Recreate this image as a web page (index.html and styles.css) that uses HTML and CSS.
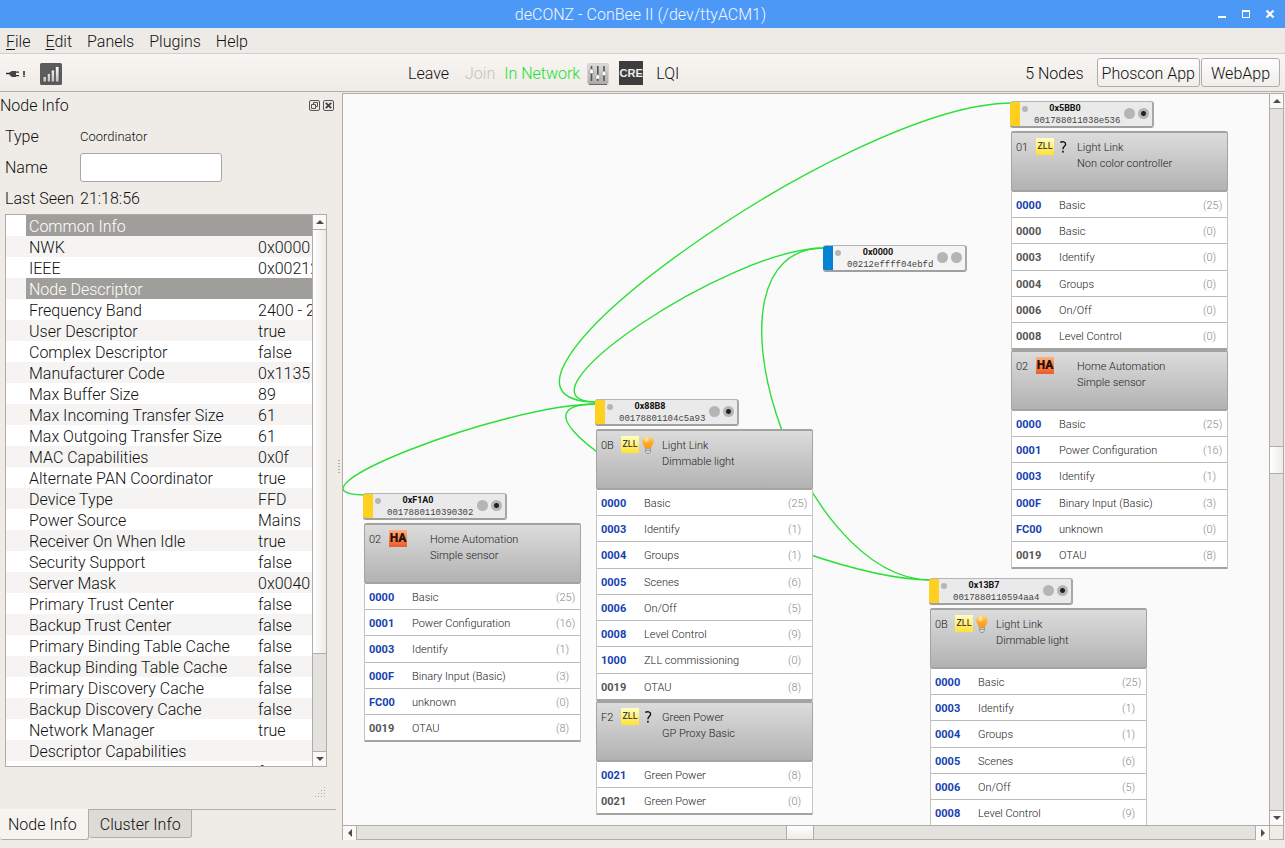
FILE: index.html
```html
<!DOCTYPE html>
<html lang="en">
<head>
<meta charset="utf-8">
<title>deCONZ - ConBee II (/dev/ttyACM1)</title>
<link rel="stylesheet" href="styles.css">
</head>
<body>
<svg class="defs" aria-hidden="true">
  <defs>
    <linearGradient id="bulbFill" x1="0" y1="0" x2="0" y2="1"><stop offset="0" stop-color="#ffd98c"/><stop offset=".45" stop-color="#ffb02e"/><stop offset="1" stop-color="#f59a12"/></linearGradient>
    <linearGradient id="barFill" x1="0" y1="0" x2="0" y2="1"><stop offset="0" stop-color="#ffffff"/><stop offset="1" stop-color="#bdbdbd"/></linearGradient>
    <linearGradient id="mixFill" x1="0" y1="0" x2="0" y2="1"><stop offset="0" stop-color="#dcdcda"/><stop offset="1" stop-color="#aaaaa8"/></linearGradient>
    <symbol id="bulb" viewBox="0 0 12 18">
      <path d="M6 .3C2.600.3.400 2.700.400 5.600c0 2.500 1.700 3.800 2.500 6.900h6.200c.8-3.100 2.500-4.400 2.500-6.900C11.600 2.700 9.400.3 6 .3z" fill="url(#bulbFill)"/>
      <ellipse cx="4.500" cy="4" rx="2.200" ry="2.400" fill="#fff" opacity=".45"/>
      <path d="M3.500 12.800h5v2.700L7.200 17.500H4.800L3.500 15.500z" fill="#d5d5d5" stroke="#8c8c8c" stroke-width=".8"/>
      <path d="M3.500 14.500h5" stroke="#8c8c8c" stroke-width=".7"/>
    </symbol>
    <symbol id="ask" viewBox="0 0 8 12">
      <path d="M1.200 1.400C3.200.4 6.600.5 6.600 3.200c0 2-2.700 2.300-2.700 5" fill="none" stroke="#111" stroke-width="1.400"/>
      <rect x="3.100" y="9.800" width="1.600" height="1.800" fill="#111"/>
    </symbol>
  </defs>
</svg>
<div class="app">
  <header class="titlebar">
    <h1>deCONZ - ConBee II (/dev/ttyACM1)</h1>
    <div class="window-buttons">
      <button aria-label="Minimize"><svg width="10" height="10" viewBox="0 0 10 10"><path d="M1 8h8" stroke="#fff" stroke-width="2"/></svg></button>
      <button aria-label="Maximize"><svg width="10" height="10" viewBox="0 0 10 10"><path d="M1.500 2v6.500h7V2" fill="none" stroke="#fff"/><path d="M1 2h8" stroke="#fff" stroke-width="2"/></svg></button>
      <button aria-label="Close"><svg width="10" height="10" viewBox="0 0 10 10"><path d="M1.500 1.500l7 7M8.500 1.500l-7 7" stroke="#fff" stroke-width="2.200"/></svg></button>
    </div>
  </header>
  <nav class="menubar">
    <button><u>F</u>ile</button><button><u>E</u>dit</button><button>Panels</button><button>Plugins</button><button>Help</button>
  </nav>
  <div class="toolbar">
    <div class="tools tools-left">
      <button aria-label="Connection"><svg width="22" height="10" viewBox="0 0 22 10"><path d="M1 4.500h4" stroke="#222" stroke-width="1.400"/><path d="M4.500 3.200L7 2h4v6H7L4.500 6z" fill="#444"/><path d="M11 3.200h3M11 6.700h3" stroke="#333" stroke-width="1.200"/><path d="M19 2v4.500M19 7v1" stroke="#333" stroke-width="1.600"/></svg></button>
      <button aria-label="Signal strength"><svg width="22" height="22" viewBox="0 0 22 22"><rect width="22" height="22" rx="1.500" fill="#5c5c5c"/><path d="M3 13.500h3.500V19H3zM7.300 10.500h3.200V19H7.300zM11.200 7h3.400v12h-3.400zM15.400 3.500H19V19h-3.600z" fill="url(#barFill)" stroke="#3a3a3a" stroke-width=".6"/></svg></button>
    </div>
    <div class="tools">
      <button class="wide">Leave</button><button class="wide" disabled>Join</button>
      <span class="online">In Network</span>
      <button aria-label="Mixer"><svg width="22" height="22" viewBox="0 0 22 22"><rect x=".5" y=".5" width="21" height="21" rx="2" fill="url(#mixFill)" stroke="#d4d2cf"/><path d="M2 21.500h18" stroke="#686868"/><path d="M4.500 3v15M10.800 3v15M17 3v15" stroke="#555" stroke-width="1.600"/><path d="M2.500 7.500q2-3 4 0v3h-4zM8.800 13q2-3 4 0v3h-4zM15 9.500q2-3 4 0v3h-4z" fill="#fff" stroke="#777" stroke-width=".5"/></svg></button>
      <button class="cre">CRE</button>
      <button>LQI</button>
    </div>
    <div class="tools tools-right">
      <span>5 Nodes</span>
      <button class="push">Phoscon App</button>
      <button class="push push-roomy">WebApp</button>
    </div>
  </div>

  <main class="main">
    <aside class="dock">
      <div class="dock-title">
        <h2>Node Info</h2>
        <button aria-label="Float"><svg width="11" height="11" viewBox="0 0 11 11"><rect x=".5" y=".5" width="10" height="10" rx="1.500" fill="none" stroke="#555"/><path d="M4.500 4V2.500h4v4H7M2.500 4.500h4v4h-4z" fill="none" stroke="#555"/></svg></button>
        <button aria-label="Close panel"><svg width="11" height="11" viewBox="0 0 11 11"><rect x=".5" y=".5" width="10" height="10" rx="1.500" fill="none" stroke="#555"/><path d="M2.800 2.800l5.400 5.400M8.200 2.800L2.800 8.200" stroke="#444" stroke-width="1.900"/></svg></button>
      </div>
      <div class="form">
        <span>Type</span><span class="small">Coordinator</span>
        <label for="name">Name</label><input id="name" type="text">
        <span>Last Seen</span><span>21:18:56</span>
      </div>
      <div class="tree">
        <div class="tree-view">
          <table>
            <colgroup><col class="c-indent"><col class="c-key"><col></colgroup>
            <tbody>
            <tr class="group"><td></td><th colspan="2">Common Info</th></tr>
            <tr><td></td><td>NWK</td><td>0x0000</td></tr>
            <tr><td></td><td>IEEE</td><td>0x00212effff04ebfd</td></tr>
            <tr class="group"><td></td><th colspan="2">Node Descriptor</th></tr>
            <tr><td></td><td>Frequency Band</td><td>2400 - 2483.5 MHz</td></tr>
            <tr><td></td><td>User Descriptor</td><td>true</td></tr>
            <tr><td></td><td>Complex Descriptor</td><td>false</td></tr>
            <tr><td></td><td>Manufacturer Code</td><td>0x1135</td></tr>
            <tr><td></td><td>Max Buffer Size</td><td>89</td></tr>
            <tr><td></td><td>Max Incoming Transfer Size</td><td>61</td></tr>
            <tr><td></td><td>Max Outgoing Transfer Size</td><td>61</td></tr>
            <tr><td></td><td>MAC Capabilities</td><td>0x0f</td></tr>
            <tr><td></td><td>Alternate PAN Coordinator</td><td>true</td></tr>
            <tr><td></td><td>Device Type</td><td>FFD</td></tr>
            <tr><td></td><td>Power Source</td><td>Mains</td></tr>
            <tr><td></td><td>Receiver On When Idle</td><td>true</td></tr>
            <tr><td></td><td>Security Support</td><td>false</td></tr>
            <tr><td></td><td>Server Mask</td><td>0x0040</td></tr>
            <tr><td></td><td>Primary Trust Center</td><td>false</td></tr>
            <tr><td></td><td>Backup Trust Center</td><td>false</td></tr>
            <tr><td></td><td>Primary Binding Table Cache</td><td>false</td></tr>
            <tr><td></td><td>Backup Binding Table Cache</td><td>false</td></tr>
            <tr><td></td><td>Primary Discovery Cache</td><td>false</td></tr>
            <tr><td></td><td>Backup Discovery Cache</td><td>false</td></tr>
            <tr><td></td><td>Network Manager</td><td>true</td></tr>
            <tr><td></td><td>Descriptor Capabilities</td><td></td></tr>
            <tr><td></td><td>Extended Active Endpoint List</td><td>false</td></tr>
            </tbody>
          </table>
        </div>
        <div class="vbar">
          <button class="arrow" aria-label="Scroll up"><svg width="8" height="4" viewBox="0 0 8 4"><path d="M0 4L4 0l4 4z"/></svg></button>
          <div class="track track-tree"><div class="thumb"></div></div>
          <button class="arrow" aria-label="Scroll down"><svg width="8" height="4" viewBox="0 0 8 4"><path d="M0 0l4 4 4-4z"/></svg></button>
        </div>
      </div>
      <div class="grip"><svg width="11" height="11" viewBox="0 0 11 11" fill="#b3b0ac"><path d="M9 0h1v1H9zM6 3h1v1H6zM9 3h1v1H9zM3 6h1v1H3zM6 6h1v1H6zM9 6h1v1H9zM0 9h1v1H0zM3 9h1v1H3zM6 9h1v1H6zM9 9h1v1H9z"/></svg></div>
      <div class="tabs" role="tablist">
        <button class="tab active" role="tab" aria-selected="true">Node Info</button><button class="tab" role="tab" aria-selected="false">Cluster Info</button>
      </div>
    </aside>
    <div class="splitter"><div class="handle"></div></div>

    <section class="canvas" aria-label="Network">
      <div class="scene">
        <svg class="links" width="926" height="732" viewBox="343 94 926 732" fill="none" stroke="#2bdf36" stroke-width="1.400">
          <path d="M1012 103C848 103 433 402 597 402"/>
          <path d="M824 248C729 248 502 402 597 402"/>
          <path d="M597 404C503 404 271 495 365 495"/>
          <path d="M824 248C689 248 796 580 931 580"/>
          <path d="M597 404C463 404 797 580 931 580"/>
        </svg>

        <article class="node n-5bb0">
          <div class="chip"><i class="led"></i><div class="ids"><b>0x5BB0</b><span>001788011038e536</span></div><i class="dot"></i><i class="dot on"></i></div>
          <div class="endpoints">
            <div class="head"><span class="number">01</span><span class="badge zll">ZLL</span><svg class="kind ask" width="8" height="12"><use href="#ask"/></svg><p>Light Link<br>Non color controller</p></div>
            <table class="clusters"><tbody>
              <tr><th>0000</th><td>Basic</td><td>(25)</td></tr>
              <tr class="out"><th>0000</th><td>Basic</td><td>(0)</td></tr>
              <tr class="out"><th>0003</th><td>Identify</td><td>(0)</td></tr>
              <tr class="out"><th>0004</th><td>Groups</td><td>(0)</td></tr>
              <tr class="out"><th>0006</th><td>On/Off</td><td>(0)</td></tr>
              <tr class="out"><th>0008</th><td>Level Control</td><td>(0)</td></tr>
            </tbody></table>
            <div class="head"><span class="number">02</span><span class="badge ha">HA</span><span></span><p>Home Automation<br>Simple sensor</p></div>
            <table class="clusters"><tbody>
              <tr><th>0000</th><td>Basic</td><td>(25)</td></tr>
              <tr><th>0001</th><td>Power Configuration</td><td>(16)</td></tr>
              <tr><th>0003</th><td>Identify</td><td>(1)</td></tr>
              <tr><th>000F</th><td>Binary Input (Basic)</td><td>(3)</td></tr>
              <tr><th>FC00</th><td>unknown</td><td>(0)</td></tr>
              <tr class="out"><th>0019</th><td>OTAU</td><td>(8)</td></tr>
            </tbody></table>
          </div>
        </article>

        <article class="node n-0000">
          <div class="chip coordinator"><i class="led"></i><div class="ids"><b>0x0000</b><span>00212effff04ebfd</span></div><i class="dot"></i><i class="dot"></i></div>
        </article>

        <article class="node n-88b8">
          <div class="chip"><i class="led"></i><div class="ids"><b>0x88B8</b><span>00178801104c5a93</span></div><i class="dot"></i><i class="dot on"></i></div>
          <div class="endpoints">
            <div class="head"><span class="number">0B</span><span class="badge zll">ZLL</span><svg class="kind" width="12" height="18"><use href="#bulb"/></svg><p>Light Link<br>Dimmable light</p></div>
            <table class="clusters"><tbody>
              <tr><th>0000</th><td>Basic</td><td>(25)</td></tr>
              <tr><th>0003</th><td>Identify</td><td>(1)</td></tr>
              <tr><th>0004</th><td>Groups</td><td>(1)</td></tr>
              <tr><th>0005</th><td>Scenes</td><td>(6)</td></tr>
              <tr><th>0006</th><td>On/Off</td><td>(5)</td></tr>
              <tr><th>0008</th><td>Level Control</td><td>(9)</td></tr>
              <tr><th>1000</th><td>ZLL commissioning</td><td>(0)</td></tr>
              <tr class="out"><th>0019</th><td>OTAU</td><td>(8)</td></tr>
            </tbody></table>
            <div class="head"><span class="number">F2</span><span class="badge zll">ZLL</span><svg class="kind ask" width="8" height="12"><use href="#ask"/></svg><p>Green Power<br>GP Proxy Basic</p></div>
            <table class="clusters"><tbody>
              <tr><th>0021</th><td>Green Power</td><td>(8)</td></tr>
              <tr class="out"><th>0021</th><td>Green Power</td><td>(0)</td></tr>
            </tbody></table>
          </div>
        </article>

        <article class="node n-f1a0">
          <div class="chip"><i class="led"></i><div class="ids"><b>0xF1A0</b><span>0017880110390302</span></div><i class="dot"></i><i class="dot on"></i></div>
          <div class="endpoints">
            <div class="head"><span class="number">02</span><span class="badge ha">HA</span><span></span><p>Home Automation<br>Simple sensor</p></div>
            <table class="clusters"><tbody>
              <tr><th>0000</th><td>Basic</td><td>(25)</td></tr>
              <tr><th>0001</th><td>Power Configuration</td><td>(16)</td></tr>
              <tr><th>0003</th><td>Identify</td><td>(1)</td></tr>
              <tr><th>000F</th><td>Binary Input (Basic)</td><td>(3)</td></tr>
              <tr><th>FC00</th><td>unknown</td><td>(0)</td></tr>
              <tr class="out"><th>0019</th><td>OTAU</td><td>(8)</td></tr>
            </tbody></table>
          </div>
        </article>

        <article class="node n-13b7">
          <div class="chip"><i class="led"></i><div class="ids"><b>0x13B7</b><span>0017880110594aa4</span></div><i class="dot"></i><i class="dot on"></i></div>
          <div class="endpoints">
            <div class="head"><span class="number">0B</span><span class="badge zll">ZLL</span><svg class="kind" width="12" height="18"><use href="#bulb"/></svg><p>Light Link<br>Dimmable light</p></div>
            <table class="clusters"><tbody>
              <tr><th>0000</th><td>Basic</td><td>(25)</td></tr>
              <tr><th>0003</th><td>Identify</td><td>(1)</td></tr>
              <tr><th>0004</th><td>Groups</td><td>(1)</td></tr>
              <tr><th>0005</th><td>Scenes</td><td>(6)</td></tr>
              <tr><th>0006</th><td>On/Off</td><td>(5)</td></tr>
              <tr><th>0008</th><td>Level Control</td><td>(9)</td></tr>
            </tbody></table>
          </div>
        </article>
      </div>
      <div class="vbar">
        <button class="arrow" aria-label="Scroll up"><svg width="8" height="4" viewBox="0 0 8 4"><path d="M0 4L4 0l4 4z"/></svg></button>
        <div class="track track-rows"><div class="thumb"></div></div>
        <button class="arrow" aria-label="Scroll down"><svg width="8" height="4" viewBox="0 0 8 4"><path d="M0 0l4 4 4-4z"/></svg></button>
      </div>
      <div class="hbar">
        <button class="arrow" aria-label="Scroll left"><svg width="4" height="8" viewBox="0 0 4 8"><path d="M4 0L0 4l4 4z"/></svg></button>
        <div class="track track-columns"><div class="thumb"></div></div>
        <button class="arrow" aria-label="Scroll right"><svg width="4" height="8" viewBox="0 0 4 8"><path d="M0 0l4 4-4 4z"/></svg></button>
      </div>
      <div class="corner"></div>
    </section>
  </main>
</div>
</body>
</html>
```
FILE: styles.css
```css
* { box-sizing: border-box; }
body {
  margin: 0;
  background: #efebe7;
  color: #111;
  font: 300 16px/20px Roboto, "Noto Sans", sans-serif;
}
button { font: inherit; color: inherit; background: none; border: 0; padding: 0; margin: 0; }
h1, h2, p { margin: 0; font: inherit; }
svg { display: block; }
.defs { position: absolute; width: 0; height: 0; }
.app { display: flex; flex-direction: column; height: 100vh; overflow: hidden; }

/* Title, menu and tool bars */
.titlebar {
  display: grid;
  grid-template-columns: 68px 1fr 72px;
  align-items: center;
  height: 28px;
  background: #4c98f6;
  color: #f2f7ff;
}
.titlebar h1 { grid-column: 2; padding-top: 2px; text-align: center; }
.window-buttons { display: flex; gap: 14px; padding-left: 4px; }
.menubar {
  display: flex;
  gap: 15px;
  height: 26px;
  padding: 2px 6px 0;
  border-bottom: 1px solid #d2cfca;
  background: #eeebe6;
}
.menubar u { text-underline-offset: 2px; text-decoration-thickness: 1px; }
.toolbar {
  display: flex;
  justify-content: space-between;
  align-items: center;
  height: 38px;
  padding: 0 5px;
  border-bottom: 1px solid #b0ada9;
  background: linear-gradient(#f8f5f2, #efebe7);
}
.tools { display: flex; align-items: center; gap: 7px; }
.tools > span, .tools > button { line-height: 24px; padding-top: 2px; }
.tools-left { gap: 13px; }
.tools-right { gap: 1px; }
.tools-right > span { margin-right: 12px; }
.tools .wide { padding-right: 9px; }
.tools .wide + .online { margin-left: -7px; }
.tools button:disabled { color: #c4c1bd; }
.tools .online { color: #21e02f; }
.tools .cre {
  width: 24px;
  height: 24px;
  margin: 0 6px 0 3px;
  padding: 0;
  background: #3d3d3d;
  color: #eee;
  font: bold 11px/24px "Liberation Sans", sans-serif;
}
.tools .push {
  height: 29px;
  padding: 2px 4px 0;
  border: 1px solid #b0ada9;
  border-radius: 3px;
  background: linear-gradient(#fefefe, #f0edea);
}
.tools .push-roomy { padding: 2px 9px 0; }

/* Dock */
.main { display: flex; flex: 1; min-height: 0; padding: 1px 1px 8px 0; }
.dock { display: flex; flex-direction: column; width: 336px; }
.dock-title { display: flex; gap: 3px; align-items: center; height: 24px; padding-right: 2px; margin-bottom: 4px; }
.dock-title h2 { flex: 1; padding-top: 2px; }
.form { display: grid; grid-template-columns: 75px 142px; grid-auto-rows: 31px; align-items: center; padding-left: 5px; }
.form .small { font-size: 13px; }
.form input {
  width: 100%;
  height: 29px;
  padding: 0 6px;
  font: inherit;
  border: 1px solid #aaa7a3;
  border-radius: 3px;
  background: #fff;
}
.tree {
  display: flex;
  flex: 1;
  min-height: 0;
  margin: 0 9px 0 5px;
  border: 1px solid #b0ada9;
  background: #fff;
}
.tree-view { flex: 1; overflow: hidden; }
.tree table { width: 100%; table-layout: fixed; border-collapse: collapse; }
.c-indent { width: 20px; }
.c-key { width: 229px; }
.tree td, .tree th {
  height: 21px;
  padding: 2px 0 0 3px;
  line-height: 19px;
  font-weight: 300;
  text-align: left;
  white-space: nowrap;
  overflow: hidden;
}
.tree tr:nth-child(even) { background: #f5f4f2; }
.tree .group { background: #fff; }
.tree .group th { background: #a09e9a; color: #fff; }
.grip { display: flex; justify-content: flex-end; height: 42px; padding: 20px 10px 0 0; }
.tabs { display: flex; align-items: flex-start; height: 31px; background: linear-gradient(#b0ada9, #b0ada9) top / 100% 1px no-repeat; }
.tab {
  height: 29px;
  padding: 2px 10px 0 11px;
  border: 1px solid #b0ada9;
  border-left: 0;
  border-radius: 0 0 3px 3px;
  background: #dedad6;
}
.tab.active { height: 31px; padding: 2px 11px 0 8px; border-top: 0; background: #f7f4f0; }
.splitter { display: grid; place-items: center; width: 6px; }
.handle {
  width: 4px;
  height: 16px;
  background: radial-gradient(circle, #b0ada9 1px, transparent 1px) 0 0 / 4px 3px;
}

/* Scroll bars */
.vbar { display: flex; flex-direction: column; width: 14px; border-left: 1px solid #b0ada9; }
.hbar { display: flex; height: 14px; border-top: 1px solid #b0ada9; }
.arrow { display: grid; place-items: center; flex: none; width: 13px; height: 14px; background: #faf9f8; }
.arrow svg { fill: #4d4d4d; }
.track { display: grid; flex: 1; background: #e4e2de; }
.thumb { background: linear-gradient(90deg, #fff, #eeebe8); border: 0 solid #b0ada9; }
.vbar .track { border: 1px solid #b0ada9; border-width: 1px 0; }
.vbar .thumb { border-width: 1px 0; }
.hbar .track { border: 1px solid #b0ada9; border-width: 0 1px; }
.hbar .thumb { grid-column: 2; border-width: 0 1px; background: linear-gradient(#fff, #eeebe8); }
.track-tree { grid-template-rows: 425fr 97fr; }
.track-tree .thumb { border-top: 0; }
.track-rows { grid-template-rows: 28px; align-content: center; }
.track-columns { grid-template-columns: 430fr 28px 442fr; }

/* Network canvas */
.canvas {
  display: grid;
  grid-template: 1fr 14px / 1fr 14px;
  flex: 1;
  min-width: 0;
  border: 1px solid #b0ada9;
  background: #fafafa;
}
.scene { position: relative; overflow: hidden; }
.corner { border: 1px solid #b0ada9; border-width: 1px 0 0 1px; background: #efebe7; }
.links { position: absolute; left: 0; top: 0; }
.node { position: absolute; width: 218px; font-size: 11px; line-height: 16px; color: #222; }
.n-5bb0 { left: 667px; top: 7px; }
.n-0000 { left: 480px; top: 151px; }
.n-88b8 { left: 252px; top: 305px; }
.n-f1a0 { left: 20px; top: 399px; }
.n-13b7 { left: 586px; top: 484px; }

.chip {
  display: flex;
  width: 144px;
  height: 27px;
  border: 1px solid #b5b5b5;
  border-width: 1px 2px 2px 0;
  border-right-color: #a8a8a8;
  border-bottom-color: #a0a0a0;
  border-radius: 3px;
  background: linear-gradient(90deg, #ffd020 10px, #eaeaea 10px);
}
.chip.coordinator { background: linear-gradient(90deg, #0583d3 10px, #f4f4f4 10px); }
.led { width: 6px; height: 6px; margin: 4px 6px 0 12px; border-radius: 50%; background: #b5b5b5; }
.ids { display: flex; flex-direction: column; width: 90px; line-height: 12px; }
.ids b { width: 62px; font-size: 9px; font-weight: 700; text-align: center; color: #111; }
.ids span { font: 9px/14px "Liberation Mono", monospace; color: #444; }
.dot { width: 11px; height: 11px; margin-top: 6px; margin-right: 3px; border-radius: 50%; background: #b5b5b5; flex: none; }
.dot.on { background: radial-gradient(circle, #222 2px, #b5b5b5 3px); }

.endpoints { margin: 3px 0 0 1px; background: #fff; }
.head {
  display: grid;
  grid-template-columns: 20px 18px 18px 1fr;
  align-items: start;
  height: 61px;
  padding: 5px 0 0 4px;
  border: 1px solid #a3a3a0;
  border-width: 2px 1px;
  border-radius: 2px;
  background: linear-gradient(#dcdcdc, #b2b2b2);
}
.head p { padding: 2px 0 0 5px; }
.number { padding-top: 2px; }
.badge { height: 17px; text-align: center; }
.zll { font-size: 9px; font-weight: 400; color: #222; background: linear-gradient(#ffffc4, #ffe033); }
.ha { font-size: 12px; font-weight: 900; color: #2a1000; background: linear-gradient(#ffaf80, #ec5a2a); }
.kind { justify-self: center; }
.ask { margin-top: 3px; }

.clusters { width: 100%; table-layout: fixed; border-spacing: 0; border: 1px solid #c4c4c4; border-width: 0 1px; }
.clusters th, .clusters td { height: 26px; padding: 2px 0 0; border-bottom: 1px solid #bcbcbc; text-align: left; white-space: nowrap; }
.clusters tr:nth-child(4n+3) > *, .clusters tr:last-child > * { height: 27px; }
.clusters th { width: 47px; padding-left: 4px; font-weight: 700; color: #1542b0; }
.clusters .out th { color: #555; }
.clusters td:last-child { width: 24px; color: #888; }
.clusters tr:last-child > * { border-bottom: 2px solid #a3a3a0; }
```
